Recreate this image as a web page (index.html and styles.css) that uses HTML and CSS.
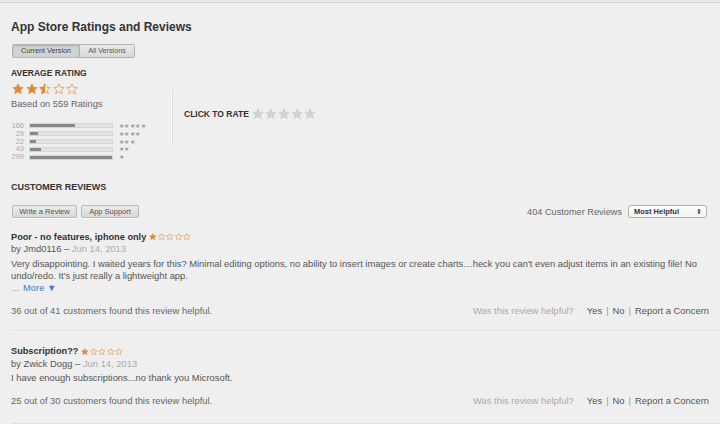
FILE: index.html
```html
<!DOCTYPE html>
<html>
<head>
<meta charset="utf-8">
<link rel="stylesheet" href="styles.css">
</head>
<body>
<svg class="defs" width="0" height="0">
  <defs>
    <path id="star" d="M12 1.5l3.1 6.9 7.4.7-5.6 5 1.7 7.4L12 17.6l-6.6 3.9 1.7-7.4-5.6-5 7.4-.7z"/>
    <clipPath id="half"><rect x="0" y="0" width="12" height="24"/></clipPath>
  </defs>
</svg>
<div class="topline"></div>
<main class="page">
  <h1 class="title">App Store Ratings and Reviews</h1>
  <div class="segmented">
    <span class="seg seg-on">Current Version</span>
    <span class="seg">All Versions</span>
  </div>

  <section class="ratings">
    <div class="avg">
      <h2 class="label">AVERAGE RATING</h2>
      <div class="bigstars">
        <svg viewBox="0 0 24 24" class="st fill"><use href="#star"/></svg>
        <svg viewBox="0 0 24 24" class="st fill"><use href="#star"/></svg>
        <svg viewBox="0 0 24 24" class="st empty"><use href="#star"/><use href="#star" class="halffill" clip-path="url(#half)"/></svg>
        <svg viewBox="0 0 24 24" class="st empty"><use href="#star"/></svg>
        <svg viewBox="0 0 24 24" class="st empty"><use href="#star"/></svg>
      </div>
      <p class="based">Based on 559 Ratings</p>
      <div class="histo">
        <div class="hrow"><span class="hn">166</span><span class="bar"><span class="fillbar" style="width:55%"></span></span><span class="hs">★★★★★</span></div>
        <div class="hrow"><span class="hn">29</span><span class="bar"><span class="fillbar" style="width:10%"></span></span><span class="hs">★★★★</span></div>
        <div class="hrow"><span class="hn">22</span><span class="bar"><span class="fillbar" style="width:7%"></span></span><span class="hs">★★★</span></div>
        <div class="hrow"><span class="hn">43</span><span class="bar"><span class="fillbar" style="width:14%"></span></span><span class="hs">★★</span></div>
        <div class="hrow"><span class="hn">299</span><span class="bar"><span class="fillbar" style="width:100%"></span></span><span class="hs">★</span></div>
      </div>
    </div>
    <div class="rate">
      <span class="label">CLICK TO RATE</span>
      <span class="ratestars">
        <svg viewBox="0 0 24 24" class="rs"><use href="#star"/></svg>
        <svg viewBox="0 0 24 24" class="rs"><use href="#star"/></svg>
        <svg viewBox="0 0 24 24" class="rs"><use href="#star"/></svg>
        <svg viewBox="0 0 24 24" class="rs"><use href="#star"/></svg>
        <svg viewBox="0 0 24 24" class="rs"><use href="#star"/></svg>
      </span>
    </div>
  </section>

  <h2 class="label cr">CUSTOMER REVIEWS</h2>
  <div class="toolbar">
    <div class="btns">
      <span class="btn btn-w">Write a Review</span>
      <span class="btn btn-a">App Support</span>
    </div>
    <div class="sort">
      <span class="count">404 Customer Reviews</span>
      <span class="select">Most Helpful<span class="arrows">⬍</span></span>
    </div>
  </div>

  <article class="review">
    <h3 class="rtitle">Poor - no features, iphone only
      <span class="smallstars">
        <svg viewBox="0 0 24 24" class="ss fill"><use href="#star"/></svg><svg viewBox="0 0 24 24" class="ss empty"><use href="#star"/></svg><svg viewBox="0 0 24 24" class="ss empty"><use href="#star"/></svg><svg viewBox="0 0 24 24" class="ss empty"><use href="#star"/></svg><svg viewBox="0 0 24 24" class="ss empty"><use href="#star"/></svg>
      </span>
    </h3>
    <p class="by">by Jmd0116 – <span class="date">Jun 14, 2013</span></p>
    <p class="body">Very disappointing. I waited years for this? Minimal editing options, no ability to insert images or create charts…heck you can't even adjust items in an existing file! No undo/redo. It's just really a lightweight app.</p>
    <p class="more">… <span class="link">More ▼</span></p>
    <div class="helpful">
      <span>36 out of 41 customers found this review helpful.</span>
      <span class="actions"><span class="q">Was this review helpful?</span><span class="a">Yes</span><span class="sep">|</span><span class="a">No</span><span class="sep">|</span><span class="a">Report a Concern</span></span>
    </div>
  </article>

  <article class="review">
    <h3 class="rtitle">Subscription??
      <span class="smallstars">
        <svg viewBox="0 0 24 24" class="ss fill"><use href="#star"/></svg><svg viewBox="0 0 24 24" class="ss empty"><use href="#star"/></svg><svg viewBox="0 0 24 24" class="ss empty"><use href="#star"/></svg><svg viewBox="0 0 24 24" class="ss empty"><use href="#star"/></svg><svg viewBox="0 0 24 24" class="ss empty"><use href="#star"/></svg>
      </span>
    </h3>
    <p class="by">by Zwick Dogg – <span class="date">Jun 14, 2013</span></p>
    <p class="body b2">I have enough subscriptions...no thank you Microsoft.</p>
    <div class="helpful h2">
      <span>25 out of 30 customers found this review helpful.</span>
      <span class="actions"><span class="q">Was this review helpful?</span><span class="a">Yes</span><span class="sep">|</span><span class="a">No</span><span class="sep">|</span><span class="a">Report a Concern</span></span>
    </div>
  </article>
</main>
</body>
</html>
```

FILE: styles.css
```css
* { box-sizing: border-box; }
html, body { margin: 0; padding: 0; }
body {
  background: #efefef;
  font-family: "Liberation Sans", Arial, sans-serif;
  color: #555;
  width: 720px;
  height: 424px;
  overflow: hidden;
}
.defs { position: absolute; width: 0; height: 0; }
p, h1, h2, h3 { margin: 0; }

.topline {
  height: 3px;
  border-bottom: 1px solid #d2d2d2;
  background: #e9e9e9;
}
.page { padding: 0 11px 0 11px; }

.title {
  margin-top: 16px;
  font-size: 12px;
  line-height: 16px;
  font-weight: bold;
  color: #333;
}

.segmented {
  margin-top: 9px;
  margin-left: 1px;
  display: inline-flex;
  height: 14px;
  border: 1px solid #b3b3b3;
  border-radius: 2px;
  overflow: hidden;
}
.seg {
  font-size: 7.2px;
  line-height: 12px;
  color: #555;
  background: linear-gradient(#e9e9e9, #d9d9d9);
}
.seg-on {
  width: 67px;
  text-align: center;
  background: #d3d3d3;
  box-shadow: inset 0 1px 2px rgba(0,0,0,0.18);
  border-right: 1px solid #b3b3b3;
  color: #444;
}
.seg:last-child { width: 54px; text-align: center; }

.label {
  font-size: 8.5px;
  line-height: 11px;
  font-weight: bold;
  color: #333;
}

.ratings { display: flex; margin-top: 10px; }
.avg { width: 161px; }
.bigstars { display: flex; gap: 1.5px; margin-top: 4px; height: 12px; margin-left: 1px; }
.st { width: 12px; height: 12px; }
.st.fill use { fill: #e58a2e; stroke: #c96f18; stroke-width: 0.8; }
.st.empty use { fill: none; stroke: #e09a55; stroke-width: 1.6; }
.st.empty use.halffill { fill: #e58a2e; stroke: #c96f18; stroke-width: 0.8; }

.based { margin-top: 4px; font-size: 9.3px; line-height: 11px; color: #666; }

.histo { margin-top: 12px; }
.hrow { display: flex; align-items: center; height: 7.8px; }
.hn { width: 13px; text-align: right; font-size: 7.5px; color: #aaa; line-height: 8px; }
.bar {
  margin-left: 5px;
  width: 84px;
  height: 5px;
  background: #e2e2e2;
  border: 1px solid #d6d6d6;
  display: flex;
}
.fillbar { background: #8a8a8a; height: 100%; }
.hs { margin-left: 6px; font-size: 6.2px; color: #9a9a9a; letter-spacing: 0.4px; line-height: 8px; }

.rate {
  margin-top: 22px;
  height: 56px;
  border-left: 1px solid #dcdcdc;
  box-shadow: -1px 0 0 #f8f8f8;
  padding: 19px 0 0 11px;
  display: flex;
  align-items: flex-start;
}
.rate .label { line-height: 11px; }
.ratestars { display: flex; gap: 1px; margin-left: 3px; margin-top: -1px; }
.rs { width: 12px; height: 12px; }
.rs use { fill: #d2d2d2; stroke: #c4c4c4; stroke-width: 0.8; }

.cr { margin-top: 21px; font-size: 9px; }

.toolbar {
  margin-top: 12px;
  display: flex;
  justify-content: space-between;
  align-items: center;
  height: 14px;
}
.btns { display: flex; gap: 4px; margin-left: 1px; }
.btn {
  height: 13px;
  border: 1px solid #b9b9b9;
  border-radius: 2px;
  background: linear-gradient(#ececec, #d8d8d8);
  box-shadow: 0 1px 0 rgba(255,255,255,0.8);
  font-size: 7.5px;
  line-height: 11px;
  color: #555;
  text-align: center;
}
.btn-w { width: 65px; }
.btn-a { width: 58px; }
.sort { display: flex; align-items: center; gap: 6px; margin-right: 2px; }
.count { font-size: 9.2px; color: #666; }
.select {
  width: 79px;
  height: 13px;
  border: 1px solid #b0b0b0;
  border-radius: 3px;
  background: linear-gradient(#ffffff, #f2f2f2);
  font-size: 7.5px;
  font-weight: bold;
  color: #333;
  line-height: 11px;
  padding-left: 5px;
  display: flex;
  justify-content: space-between;
}
.arrows { font-size: 7px; color: #555; padding-right: 4px; font-weight: normal; }

.review {
  margin: 0 -11px 0 0;
  padding-right: 11px;
  border-bottom: 1px solid #e0e0e0;
  box-shadow: 0 1px 0 #f8f8f8;
}
.review:first-of-type { margin-top: 12px; padding-bottom: 13px; }
.review + .review { padding-top: 14px; padding-bottom: 16px; }

.rtitle {
  font-size: 9.2px;
  line-height: 12px;
  font-weight: bold;
  color: #333;
  display: flex;
  align-items: center;
  gap: 3px;
}
.smallstars { display: inline-flex; gap: 1px; }
.ss { width: 7.5px; height: 7.5px; }
.ss.fill use { fill: #e58a2e; stroke: #c96f18; stroke-width: 1; }
.ss.empty use { fill: none; stroke: #e09a55; stroke-width: 2; }

.by { font-size: 9.4px; line-height: 11px; color: #555; margin-top: 0.5px; }
.date { color: #aaa; }
.body { font-size: 9.4px; line-height: 12px; color: #555; margin-top: 4px; }
.body.b2 { margin-top: 3px; }
.more { font-size: 9.4px; line-height: 12px; color: #888; }
.link { color: #3d7bd0; }

.helpful {
  margin-top: 11px;
  display: flex;
  justify-content: space-between;
  font-size: 9.4px;
  line-height: 12px;
  color: #666;
}
.helpful.h2 { margin-top: 11px; }
.actions { display: flex; }
.q { color: #aaa; margin-right: 13px; }
.a { color: #555; }
.sep { color: #999; margin: 0 4px; }
```
